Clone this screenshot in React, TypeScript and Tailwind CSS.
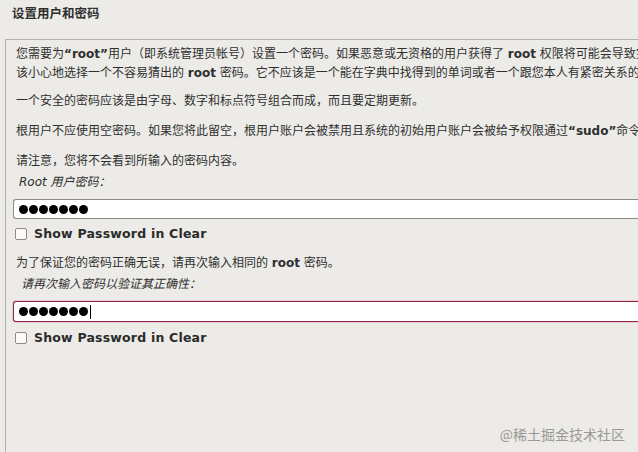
import React from "react";

const cjk = "font-['DejaVu_Sans','Noto_Sans_CJK_SC',sans-serif]";

const Dots = ({ caret }: { caret?: boolean }) => (
  <div className="flex items-center gap-[1px]">
    {Array.from({ length: 7 }).map((_, i) => (
      <span key={i} className="block h-[9px] w-[9px] rounded-full bg-black" />
    ))}
    {caret && <span className="ml-[1px] block h-[14px] w-[1px] bg-black" />}
  </div>
);

const ShowBox = () => (
  <div className="flex h-[16px] items-center">
    <span className="ml-[9px] block h-[12px] w-[12px] rounded-[2px] border border-[#8f8b86] bg-[#fbfaf9]" />
    <span className="ml-[7px] text-[12.5px] font-bold tracking-[0.2px] text-[#2b2b2b]">
      Show Password in Clear
    </span>
  </div>
);

export default function App() {
  return (
    <div className={`h-[452px] w-[638px] overflow-hidden bg-[#edebe7] text-[12px] text-[#2e3030] ${cjk}`}>
      <div className="h-[39px] pl-[12px] pt-[6px] text-[12.5px] font-bold leading-[16px]">
        设置用户和密码
      </div>
      <div className="ml-[5px] h-[413px] border-l border-t border-[#b3afaa] pt-[5px]">
        <div className="whitespace-nowrap pl-[10px] leading-[19px]">
          <div>
            您需要为<b>“root”</b>用户（即系统管理员帐号）设置一个密码。如果恶意或无资格的用户获得了 <b>root</b> 权限将可能会导致灾难性的后果，所以您应
          </div>
          <div>
            该小心地选择一个不容易猜出的 <b>root</b> 密码。它不应该是一个能在字典中找得到的单词或者一个跟您本人有紧密关系的单词。
          </div>
          <div className="mt-[9px]">一个安全的密码应该是由字母、数字和标点符号组合而成，而且要定期更新。</div>
          <div className="mt-[11px]">
            根用户不应使用空密码。如果您将此留空，根用户账户会被禁用且系统的初始用户账户会被给予权限通过<b>“sudo”</b>命令成为根用户。
          </div>
          <div className="mt-[11px]">请注意，您将不会看到所输入的密码内容。</div>
          <div className="ml-[3px] mt-[2px] italic">Root 用户密码：</div>
        </div>
        <div className="ml-[7px] mt-[7px] flex h-[20px] items-center rounded-l-[3px] border border-r-0 border-[#8e8a85] bg-white pl-[5px]">
          <Dots />
        </div>
        <div className="mt-[7px]">
          <ShowBox />
        </div>
        <div className="mt-[12px] whitespace-nowrap pl-[10px] leading-[19px]">
          <div>
            为了保证您的密码正确无误，请再次输入相同的 <b>root</b> 密码。
          </div>
          <div className="ml-[5px] mt-[2px] italic">请再次输入密码以验证其正确性：</div>
        </div>
        <div className="ml-[7px] mt-[7px] flex h-[21px] items-center rounded-l-[3px] border border-r-0 border-[#8c2a4e] bg-white pl-[5px] shadow-[0_0_0_1px_#f0c6d6]">
          <Dots caret />
        </div>
        <div className="mt-[8px]">
          <ShowBox />
        </div>
        <div className="mt-[78px] flex justify-end pr-[13px]">
          <span className="text-[14px] text-[#9a9896] font-['Noto_Sans_CJK_SC',sans-serif]">@稀土掘金技术社区</span>
        </div>
      </div>
    </div>
  );
}
